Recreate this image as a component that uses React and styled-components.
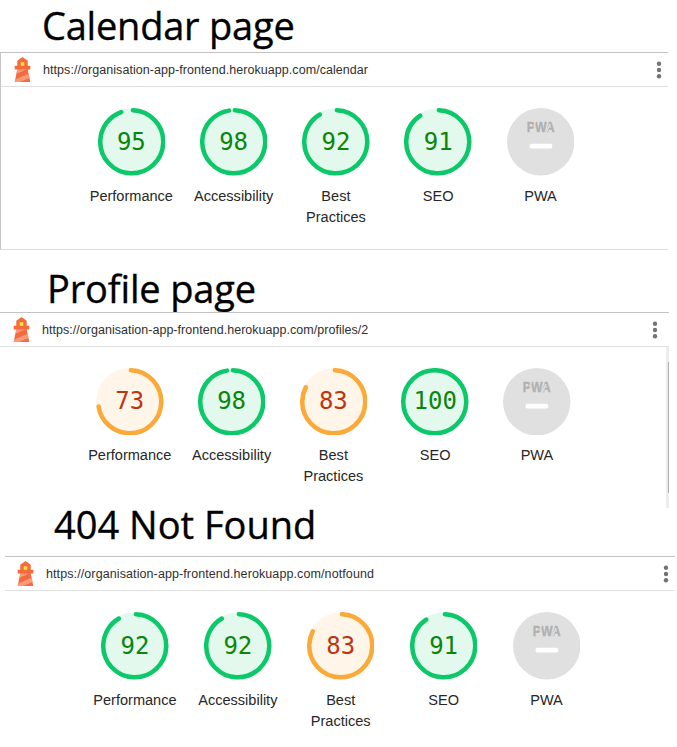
import React from "react";
import styled, { createGlobalStyle } from "styled-components";

const GlobalStyle = createGlobalStyle`
  *, *::before, *::after { box-sizing: border-box; }
  body { margin: 0; background: #fff; }
`;

const Page = styled.main`
  display: flex;
  flex-direction: column;
  width: 677px;
  height: 747px;
  overflow: hidden;
  background: #fff;
`;

const Title = styled.h1`
  flex: none;
  display: flex;
  align-items: flex-end;
  height: ${(p) => p.$height}px;
  margin: 0;
  padding-left: ${(p) => p.$left}px;
  font: 400 38px/${(p) => p.$line}px "Open Sans", sans-serif;
  letter-spacing: ${(p) => p.$spacing}px;
  -webkit-text-stroke: 0.35px #000;
  white-space: nowrap;
  color: #000;
`;

const Report = styled.section`
  flex: none;
  display: flex;
  flex-direction: column;
  width: ${(p) => p.$width}px;
  height: ${(p) => p.$height}px;
  margin-left: ${(p) => p.$left}px;
  border-left: ${(p) => (p.$framed ? "1px solid #c6c6c8" : "none")};
  border-bottom: ${(p) => (p.$framed ? "1px solid #dcdcde" : "none")};
`;

const Topbar = styled.header`
  flex: none;
  display: flex;
  align-items: center;
  height: 35px;
  padding: 0 ${(p) => p.$right}px 0 ${(p) => p.$left}px;
  border-top: 1px solid #c3c3c5;
  border-bottom: 1px solid #e0e0e0;
`;

const Logo = styled.svg`
  flex: none;
  width: 25px;
  height: 25px;
`;

const Url = styled.span`
  flex: 1;
  margin-left: 8.5px;
  font: 12.5px/16px "Liberation Sans", Arial, sans-serif;
  letter-spacing: ${(p) => p.$spacing}px;
  white-space: nowrap;
  color: #2f2f2f;
`;

const Menu = styled.svg`
  flex: none;
  width: 6px;
  height: 18px;
`;

const Body = styled.div`
  flex: 1;
  display: flex;
  justify-content: space-between;
`;

const Gauges = styled.div`
  display: grid;
  grid-template-columns: repeat(5, ${(p) => p.$column}px);
  align-content: start;
  padding: ${(p) => p.$top}px 0 0 ${(p) => p.$left}px;
`;

const Gauge = styled.div`
  display: flex;
  flex-direction: column;
  align-items: center;
`;

const Dial = styled.div`
  display: grid;
  width: 67.5px;
  height: 67.5px;

  > * { grid-area: 1 / 1; }
`;

const Ring = styled.svg`
  width: 100%;
  height: 100%;
  color: ${(p) => (p.$pass ? "#0bc868" : "#fba939")};
`;

const Score = styled.span`
  place-self: center;
  font: 24px/28px "DejaVu Sans Mono", monospace;
  color: ${(p) => (p.$pass ? "#0b850b" : "#bd3611")};
`;

const Label = styled.span`
  width: 92px;
  margin-top: 10px;
  text-align: center;
  font: 14.56px/21px "Liberation Sans", Arial, sans-serif;
  color: #272727;
`;

const Scrollbar = styled.div`
  display: flex;
  justify-content: flex-end;
  width: 3px;
  padding-top: 15px;
  background: #ededed;
`;

const Thumb = styled.div`
  width: 1px;
  height: 131px;
  background: #adadad;
`;

const CIRCUMFERENCE = 2 * Math.PI * 56;

function Lighthouse() {
  return (
    <Logo viewBox="0 0 48 48">
      <path d="m14 7 10-7 10 7v10h5v7h-5l5 24H9l5-24H9v-7h5V7Z" fill="#f46b3d" />
      <path d="M31.561 24H14l-1.689 8.105L31.561 24ZM18.983 48H9l1.022-4.907L35.723 32.27l1.663 7.98L18.983 48Z" fill="#fa9a78" />
      <path d="M20.5 10h7v7h-7z" fill="#ffe13a" />
    </Logo>
  );
}

function ScoreGauge({ label, score }) {
  const pass = score >= 90;
  const arc = score === 100 ? CIRCUMFERENCE : (CIRCUMFERENCE * score) / 100 - 4;
  return (
    <Gauge>
      <Dial>
        <Ring viewBox="0 0 120 120" $pass={pass}>
          <circle cx="60" cy="60" r="59.5" fill="currentColor" opacity="0.115" />
          <circle
            cx="60"
            cy="60"
            r="56"
            fill="none"
            stroke="currentColor"
            strokeWidth="8"
            strokeLinecap="round"
            strokeDasharray={`${arc} ${CIRCUMFERENCE}`}
            transform="rotate(-87.95 60 60)"
          />
        </Ring>
        <Score $pass={pass}>{score}</Score>
      </Dial>
      <Label>{label}</Label>
    </Gauge>
  );
}

function PwaGauge() {
  return (
    <Gauge>
      <Dial>
        <Ring viewBox="0 0 60 60">
          <circle cx="30" cy="30" r="30" fill="#e0e0e0" />
          <text
            x="17.6"
            y="20.9"
            fontFamily="Liberation Sans, Arial, sans-serif"
            fontSize="12.8"
            fontWeight="700"
            fill="#b0b0b0"
            stroke="#b0b0b0"
            strokeWidth="0.3"
            textLength="24.8"
            lengthAdjust="spacingAndGlyphs"
          >
            PWA
          </text>
          <path d="M38.2 14.2 35 21.6M25.2 11.4 23.8 17" stroke="#e0e0e0" strokeWidth="1.3" />
          <rect x="20" y="31.8" width="20.3" height="4.2" rx="1.8" fill="#fff" />
        </Ring>
      </Dial>
      <Label>PWA</Label>
    </Gauge>
  );
}

function LighthouseReport({ url, urlSpacing, scores, box, bar, gauges, framed, scrollbar }) {
  return (
    <Report $left={box.left} $width={box.width} $height={box.height} $framed={framed}>
      <Topbar $left={bar.left} $right={bar.right}>
        <Lighthouse />
        <Url $spacing={urlSpacing}>{url}</Url>
        <Menu viewBox="0 0 6 18" fill="#737373">
          <circle cx="3" cy="2.8" r="2.2" />
          <circle cx="3" cy="9" r="2.2" />
          <circle cx="3" cy="15.2" r="2.2" />
        </Menu>
      </Topbar>
      <Body>
        <Gauges $left={gauges.left} $top={gauges.top} $column={gauges.column}>
          <ScoreGauge label="Performance" score={scores[0]} />
          <ScoreGauge label="Accessibility" score={scores[1]} />
          <ScoreGauge label="Best Practices" score={scores[2]} />
          <ScoreGauge label="SEO" score={scores[3]} />
          <PwaGauge />
        </Gauges>
        {scrollbar && (
          <Scrollbar>
            <Thumb />
          </Scrollbar>
        )}
      </Body>
    </Report>
  );
}

export default function App() {
  return (
    <>
      <GlobalStyle />
      <Page>
        <Title $height={52} $line={54} $left={42} $spacing={-0.22}>Calendar page</Title>
        <LighthouseReport
          url="https://organisation-app-frontend.herokuapp.com/calendar"
          urlSpacing={0.06}
          scores={[95, 98, 92, 91]}
          box={{ left: 0, width: 668, height: 198 }}
          bar={{ left: 8.5, right: 5.7 }}
          gauges={{ left: 79.2, top: 21, column: 102.3 }}
          framed
        />
        <Title $height={62} $line={48} $left={47} $spacing={-0.15}>Profile page</Title>
        <LighthouseReport
          url="https://organisation-app-frontend.herokuapp.com/profiles/2"
          urlSpacing={0.03}
          scores={[73, 98, 83, 100]}
          box={{ left: 0, width: 669, height: 196 }}
          bar={{ left: 8.5, right: 10.7 }}
          gauges={{ left: 78.9, top: 20.5, column: 101.8 }}
          scrollbar
        />
        <Title $height={48} $line={64} $left={54} $spacing={0}>404 Not Found</Title>
        <LighthouseReport
          url="https://organisation-app-frontend.herokuapp.com/notfound"
          urlSpacing={0.1}
          scores={[92, 92, 83, 91]}
          box={{ left: 5, width: 670, height: 191 }}
          bar={{ left: 7.5, right: 5.7 }}
          gauges={{ left: 78.5, top: 21, column: 102.9 }}
        />
      </Page>
    </>
  );
}
